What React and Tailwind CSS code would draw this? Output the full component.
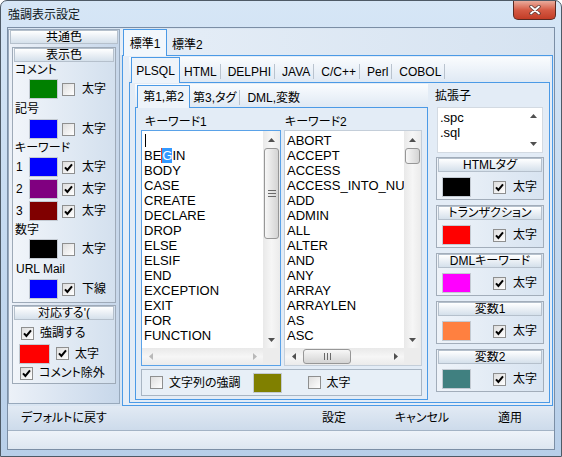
import React from "react";

const FONT = "font-['Liberation_Sans','Noto_Sans_CJK_JP',sans-serif] [font-feature-settings:'palt']";
const BLUE = "border-[#4b9ae6]";

const KW1 = ["BEGIN", "BODY", "CASE", "CREATE", "DECLARE", "DROP", "ELSE", "ELSIF", "END", "EXCEPTION", "EXIT", "FOR", "FUNCTION"];
const KW2 = ["ABORT", "ACCEPT", "ACCESS", "ACCESS_INTO_NULL", "ADD", "ADMIN", "ALL", "ALTER", "AND", "ANY", "ARRAY", "ARRAYLEN", "AS", "ASC"];

const SIDE = [
  { name: "HTMLタグ", color: "bg-[#000000]" },
  { name: "トランザクション", color: "bg-[#ff0000]" },
  { name: "DMLキーワード", color: "bg-[#ff00ff]" },
  { name: "変数1", color: "bg-[#ff8040]" },
  { name: "変数2", color: "bg-[#408080]" },
];

function Tri({ dir, off }) {
  const fill = off ? "#b9b9b9" : "#505050";
  if (dir === "up") return <svg width="7" height="4" viewBox="0 0 7 4"><polygon points="0,4 3.5,0 7,4" fill={fill} /></svg>;
  if (dir === "down") return <svg width="7" height="4" viewBox="0 0 7 4"><polygon points="0,0 3.5,4 7,0" fill={fill} /></svg>;
  if (dir === "left") return <svg width="4" height="7" viewBox="0 0 4 7"><polygon points="4,0 0,3.5 4,7" fill={fill} /></svg>;
  return <svg width="4" height="7" viewBox="0 0 4 7"><polygon points="0,0 4,3.5 0,7" fill={fill} /></svg>;
}

function Check({ on }) {
  return (
    <span className="w-[13px] h-[13px] shrink-0 border border-[#8e8f8f] bg-linear-to-br from-[#dedede] to-white flex items-center justify-center">
      {on && (
        <svg width="9" height="9" viewBox="0 0 9 9">
          <path d="M1 4.3 L3.4 7 L8 1.4" stroke="#000" strokeWidth="2" fill="none" />
        </svg>
      )}
    </span>
  );
}

function Swatch({ color }) {
  return <span className={`block w-[29px] h-[20px] shrink-0 border border-[#c3cad2] ${color}`} />;
}

function Head({ children }) {
  return (
    <div className="h-[14px] mx-px shrink-0 border border-[#b5c0cc] bg-linear-to-b from-white to-[#d5e0eb] text-center text-[12px] leading-[12px] whitespace-nowrap overflow-hidden">
      {children}
    </div>
  );
}

function ColorRow({ num, color, on, text = "太字" }) {
  return (
    <div className="h-[22px] flex items-center">
      <span className="w-[16px] pl-[3px]">{num}</span>
      <Swatch color={color} />
      <span className="ml-[4px]"><Check on={on} /></span>
      <span className="ml-[7px]">{text}</span>
    </div>
  );
}

function VThumb({ size, grip }) {
  return (
    <div className={`mx-px ${size} rounded-[3px] border border-[#979797] bg-linear-to-r from-[#f7f7f7] to-[#d4d4d4] flex items-center justify-center`}>
      {grip && (
        <svg width="8" height="7" viewBox="0 0 8 7">
          <path d="M0 0.5H8M0 3.5H8M0 6.5H8" stroke="#6a6a6a" />
        </svg>
      )}
    </div>
  );
}

function ListBox({ w, border, thumb, grip, hOff, hThumb, children }) {
  return (
    <div className={`${w} h-[236px] border ${border} bg-white flex flex-col`}>
      <div className="flex-1 flex min-h-0">
        <div className="flex-1 min-w-0 overflow-hidden pl-[2px] pt-[2px] text-[13px] leading-[15px] whitespace-nowrap">
          {children}
        </div>
        <div className="w-[17px] flex flex-col bg-linear-to-r from-[#e9e9e9] via-[#f6f6f6] to-[#ebebeb]">
          <div className="h-[17px] shrink-0 flex items-center justify-center"><Tri dir="up" /></div>
          <div className="flex-1">
            <VThumb size={thumb} grip={grip} />
          </div>
          <div className="h-[17px] shrink-0 flex items-center justify-center"><Tri dir="down" /></div>
        </div>
      </div>
      <div className="h-[17px] shrink-0 flex">
        <div className="flex-1 flex bg-linear-to-b from-[#e9e9e9] via-[#f6f6f6] to-[#ebebeb]">
          <div className="w-[17px] flex items-center justify-center"><Tri dir="left" off={hOff} /></div>
          <div className="flex-1 flex items-center">
            {hThumb && (
              <div className={`${hThumb} h-[15px] rounded-[3px] border border-[#979797] bg-linear-to-b from-[#f7f7f7] to-[#d4d4d4] flex items-center justify-center`}>
                <svg width="7" height="7" viewBox="0 0 7 7">
                  <path d="M0.5 0V7M3.5 0V7M6.5 0V7" stroke="#6a6a6a" />
                </svg>
              </div>
            )}
          </div>
          <div className="w-[17px] flex items-center justify-center"><Tri dir="right" off={hOff} /></div>
        </div>
        <div className="w-[17px] bg-[#ececec]" />
      </div>
    </div>
  );
}

function CloseBtn() {
  return (
    <div className="-mr-px w-[43px] h-[19px] rounded-b-[5px] border border-t-0 border-[#5b2a22] bg-linear-to-b from-[#e9ab9c] via-[#d55a44] to-[#c23c26] flex items-center justify-center">
      <svg width="12" height="10" viewBox="0 0 12 10">
        <path d="M2 1.5 L10 8.5 M10 1.5 L2 8.5" stroke="#5a3a36" strokeWidth="3.4" strokeLinecap="round" />
        <path d="M2 1.5 L10 8.5 M10 1.5 L2 8.5" stroke="#ffffff" strokeWidth="1.8" strokeLinecap="round" />
      </svg>
    </div>
  );
}

function LeftPanel() {
  return (
    <div className="w-[112px] h-[375px] mt-px border border-[#98a9bc] bg-linear-to-r from-[#ecf1f8] to-[#c7d7ea] flex flex-col">
      <Head>共通色</Head>

      <div className="mx-[3px] mt-[3px] h-[256px] border border-[#9eaab8] bg-linear-to-r from-[#f1f5fa] to-[#d3e0ee] flex flex-col">
        <Head>表示色</Head>
        <div className="h-[16px] pl-[2px] flex items-center">コメント</div>
        <ColorRow color="bg-[#008000]" />
        <div className="h-[18px] pl-[2px] flex items-center">記号</div>
        <ColorRow color="bg-[#0000ff]" />
        <div className="h-[16px] pl-[2px] flex items-center">キーワード</div>
        <ColorRow num="1" color="bg-[#0000ff]" on />
        <ColorRow num="2" color="bg-[#800080]" on />
        <ColorRow num="3" color="bg-[#800000]" on />
        <div className="h-[16px] pl-[2px] flex items-center">数字</div>
        <ColorRow color="bg-[#000000]" />
        <div className="h-[18px] pl-[3px] flex items-center">URL Mail</div>
        <ColorRow color="bg-[#0000ff]" on text="下線" />
      </div>

      <div className="mx-[3px] mt-[2px] h-[79px] border border-[#9eaab8] bg-linear-to-r from-[#f1f5fa] to-[#d3e0ee] flex flex-col">
        <Head>対応する'(</Head>
        <div className="h-[20px] mt-[3px] pl-[8px] flex items-center">
          <Check on />
          <span className="ml-[6px]">強調する</span>
        </div>
        <div className="h-[21px] pl-[6px] flex items-center">
          <span className="block w-[31px] h-[20px] border border-[#c3cad2] bg-[#ff0000]" />
          <span className="ml-[6px]"><Check on /></span>
          <span className="ml-[6px]">太字</span>
        </div>
        <div className="h-[18px] pl-[7px] flex items-center">
          <Check on />
          <span className="ml-[6px]">コメント除外</span>
        </div>
      </div>
    </div>
  );
}

function KeywordPage() {
  return (
    <div className="h-[293px] border border-[#4b9ae6] bg-[#e3ecf6] flex flex-col">
      <div className="h-[22px] pt-[5px] flex items-center">
        <span className="ml-[5px] w-[140px] pl-[4px]">キーワード1</span>
        <span className="ml-[3px] pl-px">キーワード2</span>
      </div>
      <div className="h-[236px] flex">
        <div className="ml-[5px]">
          <ListBox w="w-[140px]" border="border-[#5aa2e8]" thumb="h-[91px]" grip hOff>
            <div className="h-[15px] flex items-center pl-px"><span className="block w-px h-[13px] bg-black" /></div>
            <div>
              BE<span className="bg-[#3399ff] text-white border-l border-[#e8402a]">G</span>IN
            </div>
            {KW1.slice(1).map((k) => (
              <div key={k}>{k}</div>
            ))}
          </ListBox>
        </div>
        <div className="ml-[3px]">
          <ListBox w="w-[138px]" border="border-[#c4ced9]" thumb="h-[16px]" hThumb="ml-px w-[48px]">
            {KW2.map((k) => (
              <div key={k}>{k}</div>
            ))}
          </ListBox>
        </div>
      </div>
      <div className="ml-[5px] mt-[3px] w-[281px] h-[27px] border border-[#a8b5c3] bg-[#e7eff7] flex items-center pl-[8px]">
        <Check />
        <span className="ml-[6px]">文字列の強調</span>
        <span className="ml-[12px]"><Swatch color="bg-[#808000]" /></span>
        <span className="ml-[26px]"><Check /></span>
        <span className="ml-[6px]">太字</span>
      </div>
    </div>
  );
}

function RightColumn() {
  return (
    <div className="flex-1 flex flex-col">
      <div className="h-[24px] pl-[7px] pt-[2px] flex items-center">拡張子</div>
      <div className="ml-[9px] w-[106px] h-[46px] border border-[#d3dae2] bg-white flex">
        <div className="flex-1 pl-[2px] pt-[2px] text-[13px] leading-[15px]">
          <div>.spc</div>
          <div>.sql</div>
        </div>
        <div className="w-[17px] flex flex-col justify-between items-center py-[6px]">
          <Tri dir="up" />
          <Tri dir="down" />
        </div>
      </div>
      {SIDE.map((s, i) => (
        <div
          key={s.name}
          className={`ml-[8px] w-[108px] h-[43px] ${i === 0 ? "mt-[4px]" : "mt-[5px]"} border border-[#a2adba] bg-linear-to-r from-[#eef3f9] to-[#d8e4f1] flex flex-col`}
        >
          <Head>{s.name}</Head>
          <div className="flex-1 flex items-center pt-[3px] pl-[5px]">
            <Swatch color={s.color} />
            <span className="ml-[22px]"><Check on /></span>
            <span className="ml-[7px]">太字</span>
          </div>
        </div>
      ))}
    </div>
  );
}

function TabArea() {
  const langs = ["HTML", "DELPHI", "JAVA", "C/C++", "Perl", "COBOL"];
  return (
    <div className="w-[434px] h-[377px] mt-px flex flex-col">
      {/* level 1 tabs */}
      <div className="h-[26px] shrink-0 flex items-end pl-[3px] bg-linear-to-r from-[#e6eef7] to-[#d6e3f1]">
        <div className={`relative z-10 -mb-px w-[44px] h-[27px] border border-b-0 ${BLUE} bg-[#f2f7fc] flex items-center justify-center pt-px`}>
          標準1
        </div>
        <div className="h-[24px] pl-[5px] pr-[6px] pt-[3px] flex items-center">標準2</div>
      </div>

      <div className={`ml-[2px] mr-px flex-1 border ${BLUE} bg-[#e5edf7] pl-[6px] pr-[2px] pt-px`}>
        {/* level 2 tabs */}
        <div className="h-[25px] flex items-end pl-[2px] bg-linear-to-b from-[#fafcfe] to-[#dfe9f4]">
          <div className={`relative z-10 -mb-px w-[49px] h-[26px] border border-b-0 ${BLUE} bg-[#eef4fa] flex items-center justify-center`}>
            PLSQL
          </div>
          {langs.map((l, i) => (
            <div key={l} className={`h-[25px] pt-[4px] flex items-center ${i === 0 ? "pl-[4px]" : "pl-[7px]"}`}>
              <span>{l}</span>
              <span className="ml-[3px] block w-px h-[15px] bg-[#b9c3ce]" />
            </div>
          ))}
        </div>

        <div className={`h-[321px] border ${BLUE} bg-[#e3ecf6] flex`}>
          <div className="ml-[5px] w-[293px] pt-px flex flex-col">
            {/* level 3 tabs */}
            <div className="h-[23px] shrink-0 flex items-end pl-[2px] bg-linear-to-b from-[#fafcfe] to-[#dfe9f4]">
              <div className={`relative z-10 -mb-px w-[53px] h-[23px] border border-b-0 ${BLUE} bg-[#eef4fa] flex items-center justify-center`}>
                第1,第2
              </div>
              <div className="h-[23px] pt-[4px] pl-[3px] flex items-center">
                <span>第3,タグ</span>
                <span className="ml-[3px] block w-px h-[15px] bg-[#b9c3ce]" />
              </div>
              <div className="h-[23px] pt-[4px] pl-[7px] flex items-center">DML,変数</div>
            </div>
            <KeywordPage />
          </div>
          <RightColumn />
        </div>
      </div>
    </div>
  );
}

export default function App() {
  return (
    <div className={`w-[562px] h-[457px] ${FONT} text-[12px] leading-none text-black`}>
      <div className="h-full rounded-t-[7px] border border-[#4e5a66] bg-linear-to-b from-[#d6e6f6] via-[#c5daf0] to-[#b8cfe9] flex flex-col px-[6px] pb-[6px]">
        {/* title bar */}
        <div className="h-[26px] shrink-0 flex items-start justify-between">
          <span className="mt-[8px] ml-px leading-[13px] text-[#0e1620]">強調表示設定</span>
          <CloseBtn />
        </div>

        {/* client area */}
        <div className="flex-1 border border-[#7b8ea5] bg-[#d9e5f2] flex flex-col">
          <div className="h-[378px] shrink-0 flex">
            <LeftPanel />
            <TabArea />
          </div>

          <div className="h-[24px] shrink-0 flex items-center bg-linear-to-b from-[#e2eaf4] to-[#cddbeb]">
            <div className="w-[112px] text-center">デフォルトに戻す</div>
            <div className="flex-1" />
            <div className="w-[88px] text-center">設定</div>
            <div className="w-[88px] text-center">キャンセル</div>
            <div className="w-[88px] text-center">適用</div>
          </div>

          <div className="h-[19px] shrink-0 border-t border-[#a3b3c5] bg-linear-to-b from-[#eef3f9] to-[#dde6f0]" />
        </div>
      </div>
    </div>
  );
}
